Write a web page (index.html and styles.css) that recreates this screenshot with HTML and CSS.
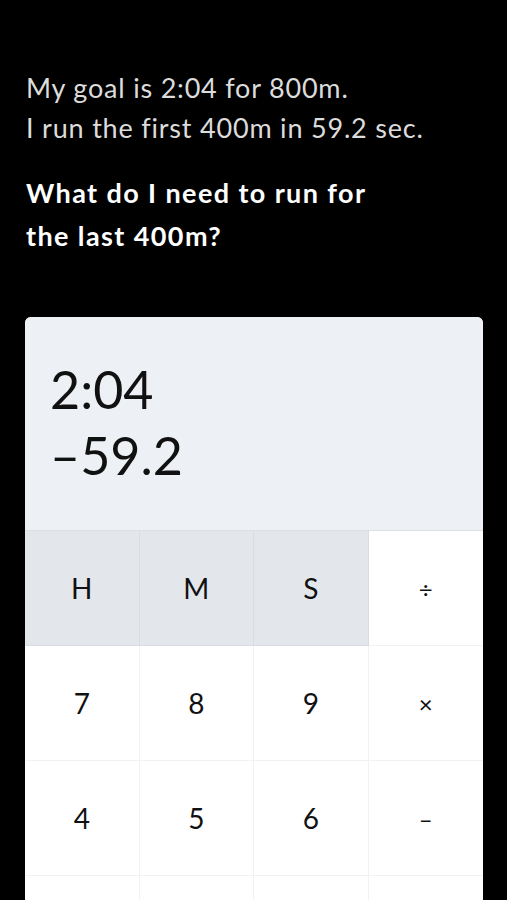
FILE: index.html
```html
<!DOCTYPE html>
<html lang="en">
<head>
    <meta charset="UTF-8">
    <meta name="viewport" content="width=device-width, initial-scale=1.0">
    <title>Split Calculator</title>
    <link rel="stylesheet" href="styles.css">
</head>
<body>
    <!-- Question -->
    <div class="intro">
        <p class="facts">My goal is 2:04 for 800m.<br>I run the first 400m in 59.2 sec.</p>
        <h1 class="question">What do I need to run for<br>the last 400m?</h1>
    </div>

    <!-- Calculator -->
    <div class="calc">
        <div class="display">
            <div class="line">2:04</div>
            <div class="line">–59.2</div>
        </div>
        <div class="keys">
            <button class="key unit">H</button>
            <button class="key unit">M</button>
            <button class="key unit">S</button>
            <button class="key op">÷</button>

            <button class="key">7</button>
            <button class="key">8</button>
            <button class="key">9</button>
            <button class="key op">×</button>

            <button class="key">4</button>
            <button class="key">5</button>
            <button class="key">6</button>
            <button class="key op">–</button>

            <!-- next row starts below the fold -->
            <span class="key"></span>
            <span class="key"></span>
            <span class="key"></span>
            <span class="key"></span>
        </div>
    </div>
</body>
</html>
```

FILE: styles.css
```css
/* Dark page */
body {
    margin: 0;
    padding: 0 24px 0 25px;
    background-color: #000;
    font-family: Lato, "Noto Sans", sans-serif;
    overflow: hidden;
}

/* Question text */
.intro {
    padding-top: 68px;
    padding-left: 1px;
}

.facts {
    margin: 0;
    color: #dcdcdc;
    font-size: 27px;
    letter-spacing: 0.8px;
    line-height: 40px;
}

.question {
    margin: 23px 0 0;
    color: #fff;
    font-size: 27px;
    font-weight: 700;
    letter-spacing: 1.4px;
    line-height: 43px;
}

/* Calculator card */
.calc {
    margin-top: 60px;
    border-radius: 6px;
    overflow: hidden;
    background-color: #fff;
}

.display {
    background-color: #edf0f5;
    padding: 39px 25px 42px;
    border-bottom: 1px solid #dcdfe3;
}

.line {
    color: #111;
    font-size: 52px;
    line-height: 66px;
}

/* Keypad */
.keys {
    display: grid;
    grid-template-columns: repeat(4, 1fr);
    grid-auto-rows: 115px;
}

.key {
    display: block;
    border: 0;
    border-right: 1px solid #f1f2f3;
    border-bottom: 1px solid #f1f2f3;
    background-color: #fff;
    color: #111;
    font-family: inherit;
    font-size: 28px;
    padding: 0;
}

.key:nth-child(4n) {
    border-right: 0;
}

.key.unit {
    background-color: #e3e6ea;
    border-color: #d9dce0;
}

.key.op {
    font-size: 24px;
}
```
